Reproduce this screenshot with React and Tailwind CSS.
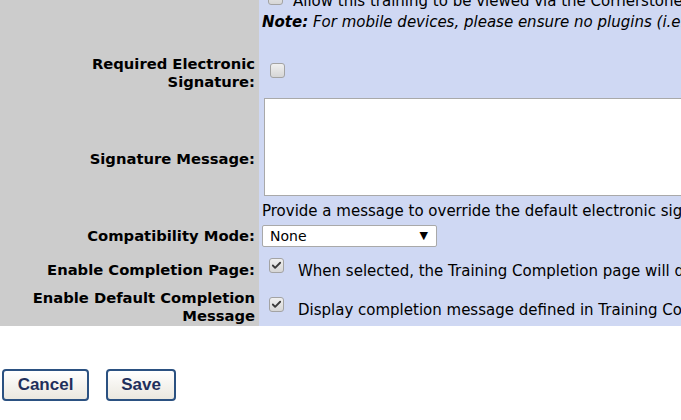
import { Check } from 'lucide-react'

function Box({ checked }) {
  return (
    <span className="inline-flex items-center justify-center w-[15px] h-[15px] shrink-0 rounded-[3px] border border-[#a3a3a3] bg-gradient-to-b from-[#f0f0f0] to-[#d6d6d6]">
      {checked && <Check className="w-[11px] h-[11px] text-[#3a3a3a]" strokeWidth={4} />}
    </span>
  )
}

function Row({ label, children, className = '', labelClass = '' }) {
  return (
    <div className={'flex ' + className}>
      <div className={'w-[259px] shrink-0 bg-[#cccccc] flex items-center justify-end text-right pr-[4px] font-bold text-[14.75px] leading-[18px] ' + labelClass}>
        {label}
      </div>
      <div className="flex-1 min-w-0 bg-[#cfd8f3] overflow-hidden whitespace-nowrap">
        {children}
      </div>
    </div>
  )
}

export default function App() {
  return (
    <div className="w-[681px] h-[420px] overflow-hidden bg-white text-[15px] leading-[18px] text-black" style={{ fontFamily: '"DejaVu Sans", Verdana, sans-serif' }}>
      <div className="-mt-[14px]">
        {/* Mobile / note row */}
        <Row label="" className="h-[65px]">
          <div className="pt-[4px]">
            <div className="flex items-start pl-[9px] gap-[10px]">
              <Box />
              <span className="mt-[2px]">Allow this training to be viewed via the Cornerstone mobile app</span>
            </div>
            <div className="mt-[3px] pl-[3px] italic">
              <b>Note:</b>&nbsp;For mobile devices, please ensure no plugins (i.e. Flash) are required
            </div>
          </div>
        </Row>

        <Row label={<span>Required Electronic<br />Signature:</span>} className="h-[44px]">
          <div className="pt-[12px] pl-[11px]"><Box /></div>
        </Row>

        <Row label="Signature Message:" className="h-[125px]" labelClass="pt-[3px]">
          <div className="pt-[3px] pl-[5px]">
            <div className="h-[98px] w-[440px] bg-white border border-[#a9a9a9]" />
          </div>
          <div className="h-[24px] flex items-end pl-[3px]">
            Provide a message to override the default electronic signature message.
          </div>
        </Row>

        <Row label="Compatibility Mode:" className="h-[31px]">
          <div className="h-full flex items-center pl-[3px]">
            <div className="w-[175px] h-[22px] bg-white border border-[#a9a9a9] rounded-[2px] flex items-center justify-between pl-[7px] pr-[8px] text-[14px]">
              <span>None</span>
              <span className="text-[11px]">▼</span>
            </div>
          </div>
        </Row>

        <Row label="Enable Completion Page:" className="h-[37px]">
          <div className="flex items-start pt-[7px] pl-[10px] gap-[14px]">
            <Box checked />
            <span className="mt-[4px]">When selected, the Training Completion page will display to users.</span>
          </div>
        </Row>

        <Row label={<span>Enable Default Completion<br />Message</span>} className="h-[38px]">
          <div className="flex items-start pt-[9px] pl-[10px] gap-[14px]">
            <Box checked />
            <span className="mt-[4px]">Display completion message defined in Training Completion preferences.</span>
          </div>
        </Row>
      </div>

      <div className="flex gap-[17px] pl-[2px] mt-[43px]" style={{ fontFamily: '"Liberation Sans", Arial, sans-serif' }}>
        <button className="w-[87px] h-[32px] rounded-[4px] border-2 border-[#2b5181] bg-gradient-to-b from-white to-[#ebe8df] text-[17px] font-bold text-[#1f2f5c]">
          Cancel
        </button>
        <button className="w-[70px] h-[32px] rounded-[4px] border-2 border-[#2b5181] bg-gradient-to-b from-white to-[#ebe8df] text-[17px] font-bold text-[#1f2f5c]">
          Save
        </button>
      </div>
    </div>
  )
}
